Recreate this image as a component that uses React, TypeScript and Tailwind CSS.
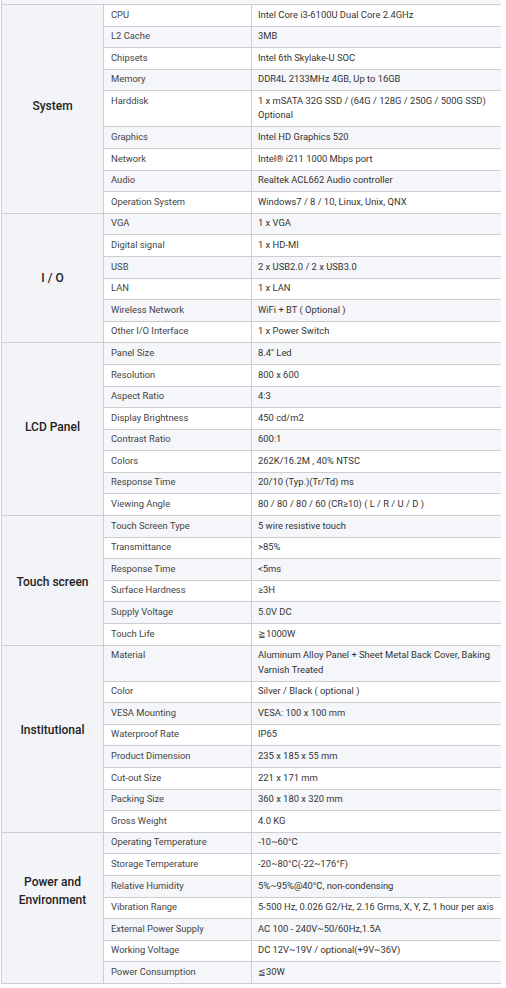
import React from "react";

// Spec sheet table, grouped by category; rows are striped across the whole table
// nudge: header cells aren't all sitting dead centre in the source page
const SPECS: { group: string[]; nudge: string; rows: [string, React.ReactNode][] }[] = [
  {
    group: ["System"],
    nudge: "pb-[6px]",
    rows: [
      ["CPU", "Intel Core i3-6100U Dual Core 2.4GHz"],
      ["L2 Cache", "3MB"],
      ["Chipsets", "Intel 6th Skylake-U SOC"],
      ["Memory", "DDR4L 2133MHz 4GB, Up to 16GB"],
      ["Harddisk", <>1 x mSATA 32G SSD / (64G / 128G / 250G / 500G SSD)<br />Optional</>],
      ["Graphics", "Intel HD Graphics 520"],
      ["Network", "Intel® i211 1000 Mbps port"],
      ["Audio", "Realtek ACL662 Audio controller"],
      ["Operation System", "Windows7 / 8 / 10, Linux, Unix, QNX"],
    ],
  },
  {
    group: ["I / O"],
    nudge: "",
    rows: [
      ["VGA", "1 x VGA"],
      ["Digital signal", "1 x HD-MI"],
      ["USB", "2 x USB2.0 / 2 x USB3.0"],
      ["LAN", "1 x LAN"],
      ["Wireless Network", "WiFi + BT ( Optional )"],
      ["Other I/O Interface", "1 x Power Switch"],
    ],
  },
  {
    group: ["LCD Panel"],
    nudge: "pb-[4px]",
    rows: [
      ["Panel Size", "8.4\" Led"],
      ["Resolution", "800 x 600"],
      ["Aspect Ratio", "4:3"],
      ["Display Brightness", "450 cd/m2"],
      ["Contrast Ratio", "600:1"],
      ["Colors", "262K/16.2M , 40% NTSC"],
      ["Response Time", "20/10 (Typ.)(Tr/Td) ms"],
      ["Viewing Angle", "80 / 80 / 80 / 60 (CR≥10) ( L / R / U / D )"],
    ],
  },
  {
    group: ["Touch screen"],
    nudge: "pt-[4px]",
    rows: [
      ["Touch Screen Type", "5 wire resistive touch"],
      ["Transmittance", ">85%"],
      ["Response Time", "<5ms"],
      ["Surface Hardness", "≥3H"],
      ["Supply Voltage", "5.0V DC"],
      ["Touch Life", "≧1000W"],
    ],
  },
  {
    group: ["Institutional"],
    nudge: "pb-[18px]",
    rows: [
      ["Material", <>Aluminum Alloy Panel + Sheet Metal Back Cover, Baking<br />Varnish Treated</>],
      ["Color", "Silver / Black ( optional )"],
      ["VESA Mounting", "VESA: 100 x 100 mm"],
      ["Waterproof Rate", "IP65"],
      ["Product Dimension", "235 x 185 x 55 mm"],
      ["Cut-out Size", "221 x 171 mm"],
      ["Packing Size", "360 x 180 x 320 mm"],
      ["Gross Weight", "4.0 KG"],
    ],
  },
  {
    group: ["Power and", "Environment"],
    nudge: "pb-[34px]",
    rows: [
      ["Operating Temperature", "-10~60°C"],
      ["Storage Temperature", "-20~80°C(-22~176°F)"],
      ["Relative Humidity", "5%~95%@40°C, non-condensing"],
      ["Vibration Range", "5-500 Hz, 0.026 G2/Hz, 2.16 Grms, X, Y, Z, 1 hour per axis"],
      ["External Power Supply", "AC 100 - 240V~50/60Hz,1.5A"],
      ["Working Voltage", "DC 12V~19V / optional(+9V~36V)"],
      ["Power Consumption", "≦30W"],
    ],
  },
];

export default function App() {
  let rowIndex = 0;

  return (
    <div className="w-[506px] h-[988px] bg-white" style={{ fontFamily: "Roboto, 'Noto Sans', sans-serif" }}>
      <div className="ml-[1px] w-[500px] overflow-hidden">
        {/* tail of the row scrolled above */}
        <div className="h-[5px] bg-[#f5f6f9] border-l border-b border-[#cdcdcd]" />
        <table className="table-fixed border-separate border-spacing-0 w-[560px] border-l border-[#cdcdcd]">
          <colgroup>
            <col className="w-[102px]" />
            <col className="w-[148px]" />
            <col className="w-[310px]" />
          </colgroup>
          <tbody>
            {SPECS.map((section) =>
              section.rows.map(([label, value], i) => {
                const striped = rowIndex++ % 2 === 1;
                const bg = striped ? "bg-[#f5f6f9]" : "bg-white";
                return (
                  <tr key={`${section.group.join(" ")}-${label}`}>
                    {i === 0 && (
                      <th
                        rowSpan={section.rows.length}
                        className={`bg-[#f3f4f8] border-r border-b border-[#cdcdcd] text-center align-middle text-[12px] leading-[18px] font-medium text-[#222] ${section.nudge}`}
                      >
                        {section.group.map((g) => (
                          <div key={g}>{g}</div>
                        ))}
                      </th>
                    )}
                    <td className={`${bg} border-r border-b border-[#cdcdcd] align-top px-[7px] pt-[2.6px] pb-[3.6px] text-[9.4px] leading-[14.4px] text-[#444] whitespace-nowrap`}>
                      {label}
                    </td>
                    <td className={`${bg} border-b border-[#cdcdcd] align-top px-[6px] pt-[2.6px] pb-[3.6px] text-[9.4px] leading-[14.4px] text-[#333] whitespace-nowrap`}>
                      {value}
                    </td>
                  </tr>
                );
              })
            )}
          </tbody>
        </table>
      </div>
    </div>
  );
}
